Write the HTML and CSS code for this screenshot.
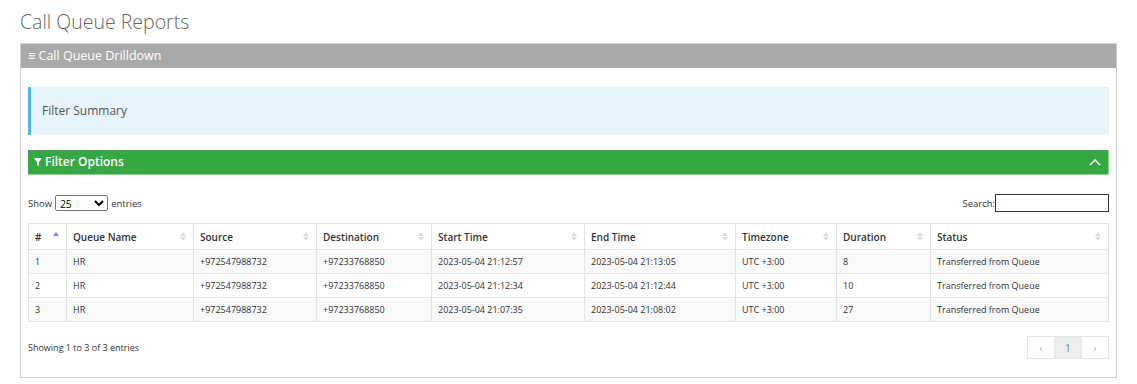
FILE: index.html
```html
<!DOCTYPE html>
<html lang="en">
<head>
    <meta charset="UTF-8">
    <title>Call Queue Reports</title>
    <link rel="stylesheet" href="styles.css">
</head>
<body>
    <h1 class="page-title">Call Queue Reports</h1>
    <div class="panel">
        <div class="panel-heading"><span class="bars">&#8801;</span> Call Queue Drilldown</div>
        <div class="panel-body">
            <div class="summary">Filter Summary</div>
            <div class="filter-bar">
                <span class="filter-title">
                    <svg class="funnel" width="8" height="8" viewBox="0 0 8 8"><path d="M0 0 H8 L5 4 V8 L3 7 V4 Z" fill="#fff"/></svg>
                    Filter Options</span>
                <svg class="chevron" width="12" height="8" viewBox="0 0 12 8"><path d="M1 7 L6 2 L11 7" fill="none" stroke="#fff" stroke-width="1.5"/></svg>
            </div>
            <div class="table-top">
                <label>Show
                    <select>
                        <option>25</option>
                    </select>
                    entries</label>
                <label>Search:<input type="text" class="search"></label>
            </div>
            <table class="data">
                <thead>
                    <tr>
                        <th class="sort-asc">#</th>
                        <th>Queue Name</th>
                        <th>Source</th>
                        <th>Destination</th>
                        <th>Start Time</th>
                        <th>End Time</th>
                        <th>Timezone</th>
                        <th>Duration</th>
                        <th>Status</th>
                    </tr>
                </thead>
                <tbody>
                    <tr>
                        <td>1</td><td>HR</td><td>+972547988732</td><td>+97233768850</td>
                        <td>2023-05-04 21:12:57</td><td>2023-05-04 21:13:05</td><td>UTC +3:00</td><td>8</td><td>Transferred from Queue</td>
                    </tr>
                    <tr>
                        <td>2</td><td>HR</td><td>+972547988732</td><td>+97233768850</td>
                        <td>2023-05-04 21:12:34</td><td>2023-05-04 21:12:44</td><td>UTC +3:00</td><td>10</td><td>Transferred from Queue</td>
                    </tr>
                    <tr>
                        <td>3</td><td>HR</td><td>+972547988732</td><td>+97233768850</td>
                        <td>2023-05-04 21:07:35</td><td>2023-05-04 21:08:02</td><td>UTC +3:00</td><td>27</td><td>Transferred from Queue</td>
                    </tr>
                </tbody>
            </table>
            <div class="table-bottom">
                <div class="info">Showing 1 to 3 of 3 entries</div>
                <div class="pager">
                    <span class="page">&lsaquo;</span>
                    <span class="page current">1</span>
                    <span class="page">&rsaquo;</span>
                </div>
            </div>
        </div>
    </div>
</body>
</html>
```

FILE: styles.css
```css
body {
    margin: 0;
    padding: 0 20px;
    font-family: "Open Sans", Arial, sans-serif;
    color: #333;
    background: #fff;
}
.page-title {
    margin: 0;
    padding: 9px 0 8px;
    font-size: 19.5px;
    font-weight: 300;
    color: #666;
    line-height: 26px;
}
.panel {
    border: 1px solid #cfcfcf;
    height: 335px;
    box-sizing: border-box;
}
.panel-heading {
    background: #a9a9a9;
    color: #fff;
    font-size: 12.5px;
    line-height: 24px;
    padding: 0 7px;
}
.bars {
    font-weight: 700;
}
.panel-body {
    padding: 19px 7px 0;
}
.summary {
    background: #e8f4fb;
    border-left: 3px solid #55b7e8;
    height: 48px;
    line-height: 48px;
    padding-left: 11px;
    font-size: 12px;
    color: #555;
}
.filter-bar {
    margin-top: 15px;
    background: #35a844;
    border: 1px solid #88d494;
    border-top: 0;
    border-left: 0;
    color: #fff;
    font-size: 12px;
    font-weight: 600;
    line-height: 24px;
    padding: 0 6px;
    display: flex;
    justify-content: space-between;
    align-items: center;
}
.filter-title {
    display: flex;
    align-items: center;
    gap: 3px;
}
.chevron {
    margin-right: 1px;
}
.table-top {
    display: flex;
    justify-content: space-between;
    align-items: center;
    font-size: 9.5px;
    color: #333;
    margin-top: 19px;
    height: 18px;
}
.table-top label {
    display: flex;
    align-items: center;
    gap: 2px;
}
.table-top select {
    font-family: inherit;
    font-size: 10px;
    width: 53px;
    height: 16px;
    padding: 0;
    margin: 0 1px;
    border: 1px solid #767676;
    border-radius: 2px;
    background: #fff;
}
.search {
    width: 114px;
    height: 18px;
    box-sizing: border-box;
    border: 1px solid #333;
    padding: 1px 2px;
    margin: 0 0 0 -2px;
}
.data {
    width: 100%;
    table-layout: fixed;
    border-collapse: collapse;
    margin-top: 11px;
    font-size: 9px;
    color: #333;
}
.data th, .data td {
    border: 1px solid #e4e4e4;
    text-align: left;
    padding: 0 6px;
    white-space: nowrap;
}
.data th {
    font-weight: 600;
    font-size: 10px;
    height: 25px;
    position: relative;
}
.data th::after {
    content: "";
    position: absolute;
    right: 7px;
    top: 8px;
    width: 0;
    height: 0;
    border-left: 3px solid transparent;
    border-right: 3px solid transparent;
    border-bottom: 4px solid #ddd;
}
.data th::before {
    content: "";
    position: absolute;
    right: 7px;
    top: 13px;
    width: 0;
    height: 0;
    border-left: 3px solid transparent;
    border-right: 3px solid transparent;
    border-top: 4px solid #ddd;
}
.data th.sort-asc::after {
    border-bottom-color: #7b84d6;
}
.data th.sort-asc::before {
    border-top-color: transparent;
}
.data td {
    height: 23px;
}
.data tbody tr:nth-child(odd) {
    background: #f9f9f9;
}
.data th:nth-child(1) { width: 25px; }
.data th:nth-child(2) { width: 114px; }
.data th:nth-child(3) { width: 110px; }
.data th:nth-child(4) { width: 102px; }
.data th:nth-child(5) { width: 140px; }
.data th:nth-child(6) { width: 138px; }
.data th:nth-child(7) { width: 88px; }
.data th:nth-child(8) { width: 81px; }
.table-bottom {
    display: flex;
    justify-content: space-between;
    align-items: center;
    margin-top: 14px;
}
.info {
    font-size: 9px;
    color: #333;
}
.pager {
    display: flex;
    border: 1px solid #e6e6e6;
}
.page {
    width: 26px;
    height: 21px;
    line-height: 21px;
    text-align: center;
    font-size: 11px;
    color: #aaa;
    border-left: 1px solid #e6e6e6;
}
.page:first-child {
    border-left: 0;
}
.page.current {
    background: #eee;
    color: #6d8fbf;
}
```
